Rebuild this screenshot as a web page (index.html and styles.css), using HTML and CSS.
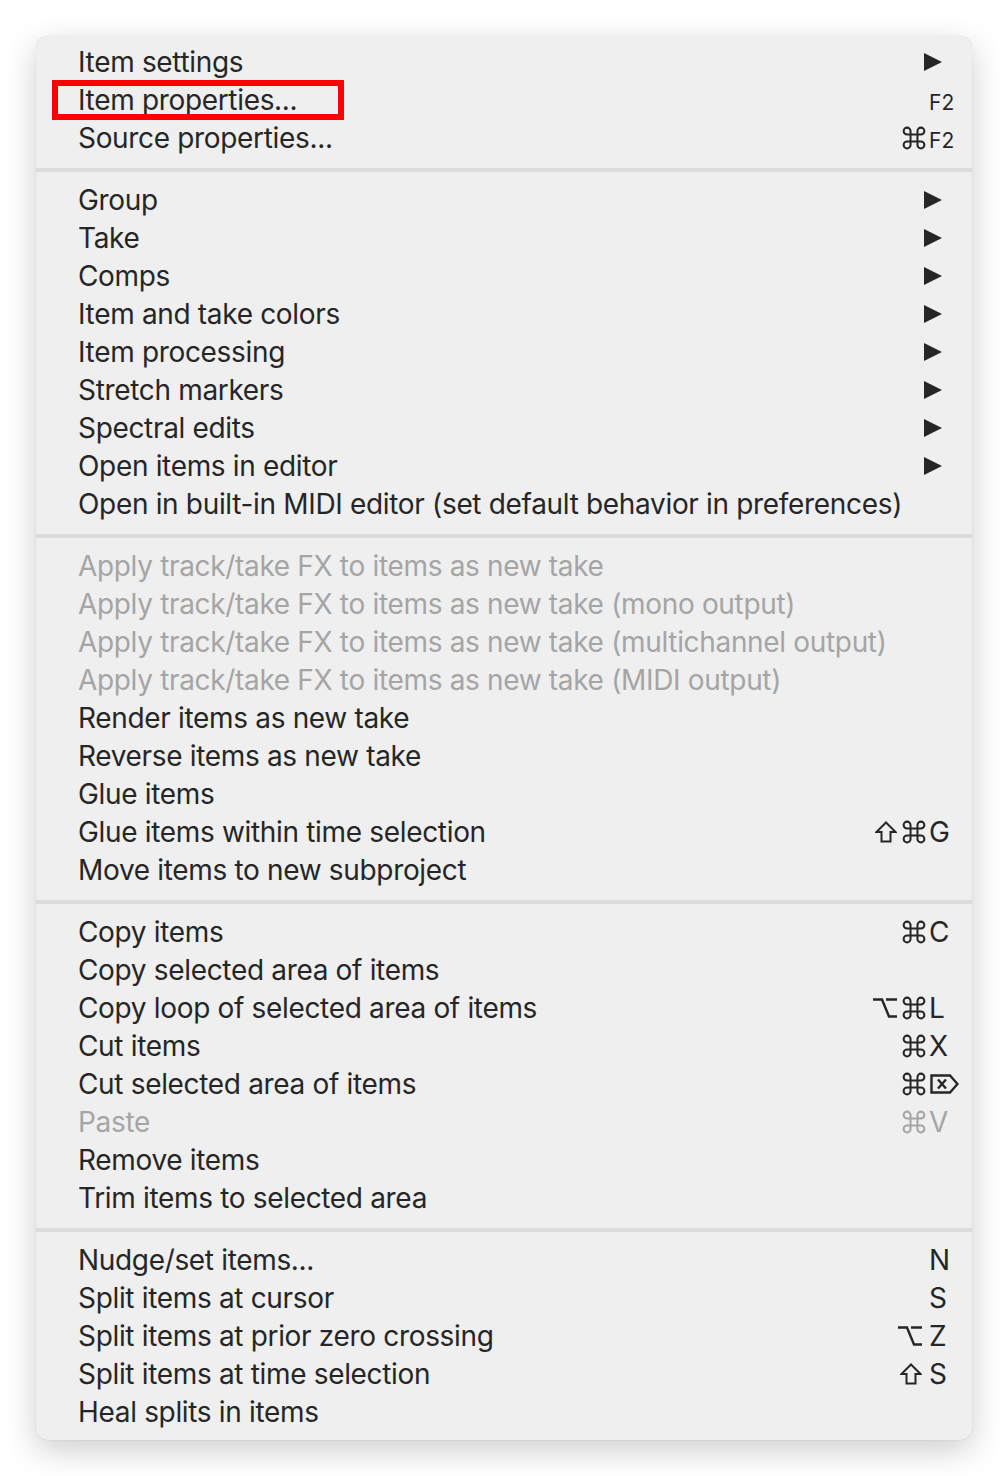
FILE: index.html
```html
<!DOCTYPE html>
<html>
<head>
<meta charset="utf-8">
<link rel="stylesheet" href="styles.css">
</head>
<body>
<svg class="defs" width="0" height="0">
  <defs>
    <symbol id="cmd" viewBox="1.6 1.6 20.8 20.8"><path d="M9 9H15V15H9Z M9 9V6a3 3 0 1 0 -3 3H9 M15 9V6a3 3 0 1 1 3 3H15 M15 15v3a3 3 0 1 0 3 -3H15 M9 15v3a3 3 0 1 1 -3 -3H9" fill="none" stroke="currentColor" stroke-width="1.75"/></symbol>
    <symbol id="shift" viewBox="0 0 22 22"><path d="M11 1.5L20.5 11H15.5V20.5H6.5V11H1.5Z" fill="none" stroke="currentColor" stroke-width="2" stroke-linejoin="miter"/></symbol>
    <symbol id="opt" viewBox="0 0 24 20"><path d="M0 1.5H9L16 18.5H24 M13 1.5H24" fill="none" stroke="currentColor" stroke-width="2.4"/></symbol>
    <symbol id="del" viewBox="0 0 29 20"><path d="M1.5 1.5H20L27.5 10L20 18.5H1.5Z M8 5.5L16 14.5 M16 5.5L8 14.5" fill="none" stroke="currentColor" stroke-width="2.4"/></symbol>
  </defs>
</svg>
<div class="menu">
  <div class="section first">
    <div class="row"><span class="label">Item settings</span><span class="arrow"></span></div>
    <div class="row"><span class="label">Item properties...</span><span class="sc"><span class="mod"></span><span class="key fn">F2</span></span><span class="highlight"></span></div>
    <div class="row"><span class="label">Source properties...</span><span class="sc"><span class="mod"><svg class="g gcmd"><use href="#cmd"/></svg></span><span class="key fn">F2</span></span></div>
  </div>
  <div class="sep"></div>
  <div class="section">
    <div class="row"><span class="label">Group</span><span class="arrow"></span></div>
    <div class="row"><span class="label">Take</span><span class="arrow"></span></div>
    <div class="row"><span class="label">Comps</span><span class="arrow"></span></div>
    <div class="row"><span class="label">Item and take colors</span><span class="arrow"></span></div>
    <div class="row"><span class="label">Item processing</span><span class="arrow"></span></div>
    <div class="row"><span class="label">Stretch markers</span><span class="arrow"></span></div>
    <div class="row"><span class="label">Spectral edits</span><span class="arrow"></span></div>
    <div class="row"><span class="label">Open items in editor</span><span class="arrow"></span></div>
    <div class="row"><span class="label">Open in built-in MIDI editor (set default behavior in preferences)</span></div>
  </div>
  <div class="sep"></div>
  <div class="section">
    <div class="row disabled"><span class="label">Apply track/take FX to items as new take</span></div>
    <div class="row disabled"><span class="label">Apply track/take FX to items as new take (mono output)</span></div>
    <div class="row disabled"><span class="label">Apply track/take FX to items as new take (multichannel output)</span></div>
    <div class="row disabled"><span class="label">Apply track/take FX to items as new take (MIDI output)</span></div>
    <div class="row"><span class="label">Render items as new take</span></div>
    <div class="row"><span class="label">Reverse items as new take</span></div>
    <div class="row"><span class="label">Glue items</span></div>
    <div class="row"><span class="label">Glue items within time selection</span><span class="sc"><span class="mod"><svg class="g gshift"><use href="#shift"/></svg><svg class="g gcmd"><use href="#cmd"/></svg></span><span class="key">G</span></span></div>
    <div class="row"><span class="label">Move items to new subproject</span></div>
  </div>
  <div class="sep"></div>
  <div class="section">
    <div class="row"><span class="label">Copy items</span><span class="sc"><span class="mod"><svg class="g gcmd"><use href="#cmd"/></svg></span><span class="key">C</span></span></div>
    <div class="row"><span class="label">Copy selected area of items</span></div>
    <div class="row"><span class="label">Copy loop of selected area of items</span><span class="sc"><span class="mod"><svg class="g gopt"><use href="#opt"/></svg><svg class="g gcmd"><use href="#cmd"/></svg></span><span class="key">L</span></span></div>
    <div class="row"><span class="label">Cut items</span><span class="sc"><span class="mod"><svg class="g gcmd"><use href="#cmd"/></svg></span><span class="key">X</span></span></div>
    <div class="row"><span class="label">Cut selected area of items</span><span class="sc"><span class="mod"><svg class="g gcmd"><use href="#cmd"/></svg></span><span class="key"><svg class="g gdel"><use href="#del"/></svg></span></span></div>
    <div class="row disabled"><span class="label">Paste</span><span class="sc"><span class="mod"><svg class="g gcmd"><use href="#cmd"/></svg></span><span class="key">V</span></span></div>
    <div class="row"><span class="label">Remove items</span></div>
    <div class="row"><span class="label">Trim items to selected area</span></div>
  </div>
  <div class="sep"></div>
  <div class="section last">
    <div class="row"><span class="label">Nudge/set items...</span><span class="sc"><span class="mod"></span><span class="key">N</span></span></div>
    <div class="row"><span class="label">Split items at cursor</span><span class="sc"><span class="mod"></span><span class="key">S</span></span></div>
    <div class="row"><span class="label">Split items at prior zero crossing</span><span class="sc"><span class="mod lone"><svg class="g gopt"><use href="#opt"/></svg></span><span class="key">Z</span></span></div>
    <div class="row"><span class="label">Split items at time selection</span><span class="sc"><span class="mod lone"><svg class="g gshift"><use href="#shift"/></svg></span><span class="key">S</span></span></div>
    <div class="row"><span class="label">Heal splits in items</span></div>
  </div>
</div>
</body>
</html>
```
FILE: styles.css
```css
html, body {
  margin: 0;
  padding: 0;
  background: #ffffff;
}
body {
  padding: 36px;
  font-family: Inter, "Noto Sans", sans-serif;
}
.defs {
  position: absolute;
  width: 0;
  height: 0;
  overflow: hidden;
}
.menu {
  width: 936px;
  height: 1404px;
  box-sizing: border-box;
  background: #efefef;
  border-radius: 12px;
  box-shadow: 0 10px 32px rgba(0, 0, 0, 0.2), 0 0 1px rgba(0, 0, 0, 0.2);
  padding: 7px 0 9px;
  color: #262626;
}
.sep {
  height: 4px;
  background: #dcdcdc;
  margin: 11px 0 9px;
}
.row {
  position: relative;
  height: 38px;
  display: flex;
  align-items: center;
  padding-left: 42px;
  font-size: 28px;
  letter-spacing: -0.33px;
  line-height: 38px;
}
.label {
  flex: 1;
  white-space: nowrap;
}
.disabled {
  color: #a5a5a5;
}
.arrow {
  width: 0;
  height: 0;
  border-left: 18px solid #262626;
  border-top: 9.5px solid transparent;
  border-bottom: 9.5px solid transparent;
  margin-right: 30px;
}
.sc {
  display: flex;
  align-items: center;
}
.mod {
  width: 70px;
  display: flex;
  justify-content: flex-end;
  align-items: center;
  gap: 5px;
}
.mod.lone {
  padding-right: 4px;
  box-sizing: border-box;
}
.g {
  display: block;
}
.gcmd {
  width: 24px;
  height: 24px;
}
.gshift {
  width: 22px;
  height: 22px;
}
.gopt {
  width: 24px;
  height: 20px;
}
.gdel {
  width: 29px;
  height: 20px;
  margin-left: 1px;
}
.key {
  width: 43px;
  margin-left: 3px;
  display: flex;
  align-items: center;
  letter-spacing: 0;
  font-size: 28px;
}
.key.fn {
  font-size: 21px;
  padding-top: 5px;
}
.highlight {
  position: absolute;
  left: 16px;
  top: -1px;
  width: 292px;
  height: 40px;
  box-sizing: border-box;
  border: 6px solid #ff0000;
}
```
